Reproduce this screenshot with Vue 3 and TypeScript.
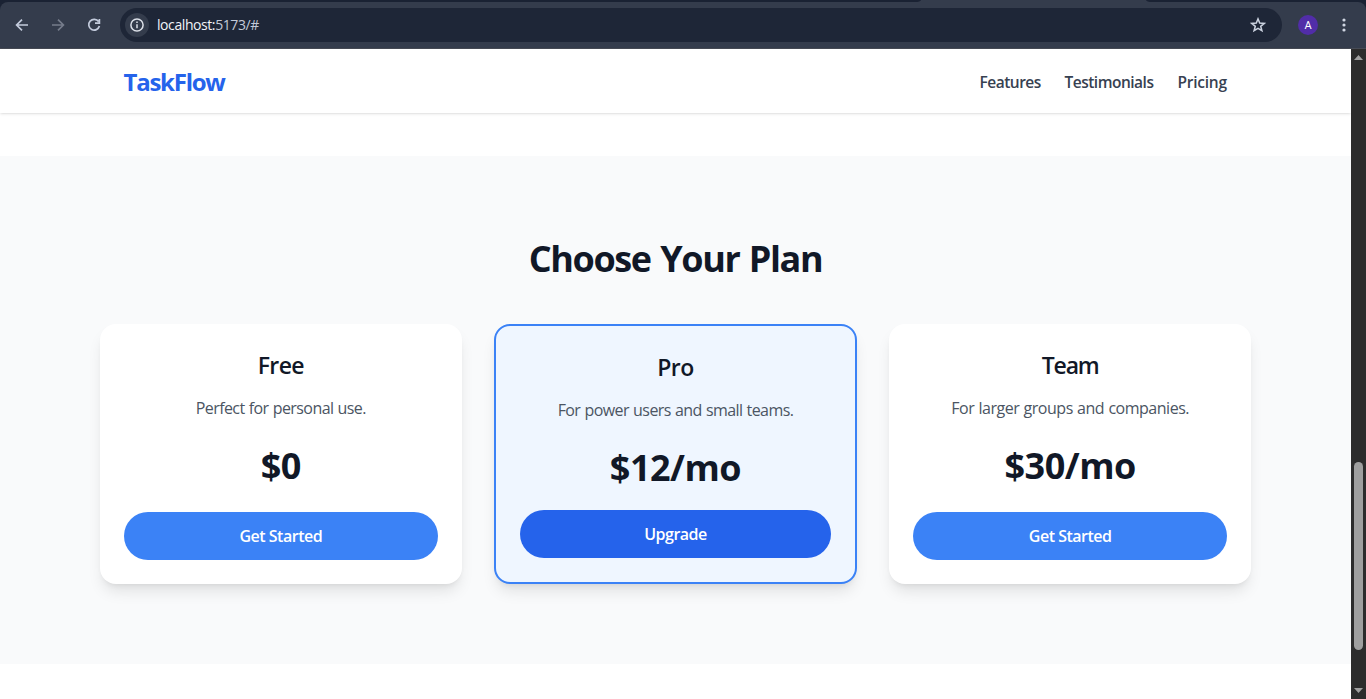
<script setup lang="ts">
interface Plan {
  id: string
  name: string
  text: string
  price: string
  action: string
  featured?: boolean
}

const links: { id: string; label: string }[] = [
  { id: 'features', label: 'Features' },
  { id: 'testimonials', label: 'Testimonials' },
  { id: 'pricing', label: 'Pricing' },
]

const plans: Plan[] = [
  { id: 'free', name: 'Free', text: 'Perfect for personal use.', price: '$0', action: 'Get Started' },
  { id: 'pro', name: 'Pro', text: 'For power users and small teams.', price: '$12/mo', action: 'Upgrade', featured: true },
  { id: 'team', name: 'Team', text: 'For larger groups and companies.', price: '$30/mo', action: 'Get Started' },
]
</script>

<template>
  <div class="window">
    <div class="tabstrip"><div class="strip-left"></div><div class="strip-right"></div></div>
    <div class="toolbar">
      <svg class="tool" viewBox="0 0 16 16"><path d="M14 8H3M8 2.6L2.6 8L8 13.4" /></svg>
      <svg class="tool dim" viewBox="0 0 16 16"><path d="M2 8H13M8 2.6L13.4 8L8 13.4" /></svg>
      <svg class="tool" viewBox="0 0 16 16"><path d="M12.6 4.6A5.4 5.4 0 1 0 13.4 9M13.4 2V6.2H9" /></svg>
      <div class="address">
        <span class="info">
          <svg viewBox="0 0 16 16"><circle cx="8" cy="8" r="6.1" /><path d="M8 7.2V11.3M8 4.5V6" /></svg>
        </span>
        <span class="url"><b>localhost:</b>5173/#</span>
        <svg class="star" viewBox="0 0 16 16"><path d="M8 1.9L9.7 6.1L14.2 6.4L10.7 9.3L11.9 13.7L8 11.3L4.1 13.7L5.3 9.3L1.8 6.4L6.3 6.1Z" /></svg>
      </div>
      <span class="avatar">A</span>
      <svg class="menu" viewBox="0 0 4 16"><circle cx="2" cy="3" r="1.6" /><circle cx="2" cy="8" r="1.6" /><circle cx="2" cy="13" r="1.6" /></svg>
    </div>
    <div class="viewport">
      <div class="page">
        <header class="header">
          <div class="header-inner">
            <span class="brand">TaskFlow</span>
            <nav class="nav">
              <a v-for="l in links" :key="l.id" :class="l.id">{{ l.label }}</a>
            </nav>
          </div>
        </header>
        <section class="pricing-section">
          <h2>Choose Your Plan</h2>
          <div class="plans">
            <article v-for="p in plans" :key="p.id" class="plan" :class="[p.id, { featured: p.featured }]">
              <h3>{{ p.name }}</h3>
              <p class="text">{{ p.text }}</p>
              <p class="price">{{ p.price }}</p>
              <button type="button">{{ p.action }}</button>
            </article>
          </div>
        </section>
      </div>
      <div class="scrollbar">
        <svg viewBox="0 0 9 5"><path d="M4.5 0L9 5H0Z" /></svg>
        <div class="thumb"></div>
        <svg viewBox="0 0 9 5"><path d="M4.5 5L9 0H0Z" /></svg>
      </div>
    </div>
  </div>
</template>

<style>
body { margin: 0; overflow: hidden; }
</style>

<style scoped>
* { box-sizing: border-box; }
.window {
  width: 1366px;
  height: 699px;
  display: flex;
  flex-direction: column;
  overflow: hidden;
  background: #1a2233;
  font-family: 'Segoe UI', 'Open Sans', 'Noto Sans', sans-serif;
}
.tabstrip { height: 2px; flex: none; display: flex; justify-content: space-between; background: #343c4c; }
.strip-left { width: 921px; background: #1a2233; border-bottom-right-radius: 6px 2px; }
.strip-right { width: 220px; background: #1a2233; border-bottom-left-radius: 6px 2px; }
.toolbar {
  height: 47px;
  flex: none;
  display: flex;
  align-items: center;
  padding: 0 20px 0 14px;
  background: #343c4c;
  border-bottom: 1px solid #474b55;
  border-radius: 8px 8px 0 0;
}
.tool { width: 16px; height: 16px; margin-right: 20px; fill: none; stroke: #c3cbdc; stroke-width: 1.7; }
.tool.dim { stroke: #757c8b; }
.tool:nth-child(3) { margin-right: 18px; }
.address {
  width: 1162px;
  height: 34px;
  display: flex;
  align-items: center;
  padding: 0 16px 0 5px;
  border-radius: 17px;
  background: #1e2637;
}
.info { width: 24px; height: 24px; display: flex; align-items: center; justify-content: center; border-radius: 50%; background: #343c4c; }
.info svg { width: 16px; height: 16px; fill: none; stroke: #dce0e8; stroke-width: 1.5; }
.url { flex: 1; margin-left: 8px; font-size: 14px; line-height: 20px; letter-spacing: -0.42px; color: #c3cad8; }
.url b { font-weight: 400; color: #f0f3f8; }
.star { width: 16px; height: 16px; fill: none; stroke: #cbd2df; stroke-width: 1.5; }
.avatar {
  width: 20px;
  height: 20px;
  margin-left: 16px;
  border-radius: 50%;
  background: #512da8;
  color: #fff;
  font: 400 11px/21px Roboto, sans-serif;
  text-align: center;
}
.menu { width: 4px; height: 16px; margin-left: 24px; fill: #d0d6e2; }
.viewport { flex: 1; display: flex; min-height: 0; }
.page { width: 1351px; background: #fff; }
.header { height: 64px; background: #fff; box-shadow: 0 1px 3px rgba(0, 0, 0, 0.1), 0 1px 2px -1px rgba(0, 0, 0, 0.1); }
.header-inner { width: 1152px; height: 64px; margin: 0 auto; padding: 0 24px; display: flex; align-items: center; justify-content: space-between; }
.brand { font-size: 24px; line-height: 32px; font-weight: 700; letter-spacing: -1.25px; color: #2563eb; white-space: nowrap; padding-top: 2px; }
.nav { display: flex; gap: 24px; padding-top: 1px; font-size: 15.5px; line-height: 24px; font-weight: 600; color: #374151; white-space: nowrap; }
.features { width: 61px; letter-spacing: -0.5px; }
.testimonials { width: 89px; letter-spacing: -0.5px; }
.pricing { width: 50px; letter-spacing: -0.25px; }
.pricing-section { height: 508px; margin-top: 43px; padding: 80px 0; background: #f9fafb; color: #111827; text-align: center; }
h2 { margin: 0 0 48px; height: 40px; padding-top: 3px; font-size: 36px; line-height: 40px; font-weight: 700; letter-spacing: -1.4px; word-spacing: 1.5px; }
.plans { width: 1152px; height: 260px; margin: 0 auto; display: grid; grid-template-columns: repeat(3, 1fr); gap: 32px; }
.plan {
  display: flex;
  flex-direction: column;
  padding: 24px;
  border-radius: 16px;
  background: #fff;
  box-shadow: 0 10px 15px -3px rgba(0, 0, 0, 0.1), 0 4px 6px -4px rgba(0, 0, 0, 0.1);
}
.plan.featured { border: 2px solid #3b82f6; background: #eff6ff; }
h3 { margin: 0 0 15px; padding-top: 1px; font-size: 23px; line-height: 32px; font-weight: 600; letter-spacing: -0.6px; }
.team h3 { letter-spacing: -1.2px; }
.text { margin: 0 0 26px; font-size: 16px; line-height: 24px; letter-spacing: -0.58px; word-spacing: 0.6px; color: #4b5563; white-space: nowrap; }
.team .text { letter-spacing: -0.48px; }
.price { margin: 0; font-size: 36px; line-height: 40px; font-weight: 700; letter-spacing: -0.5px; }
button {
  width: 100%;
  height: 48px;
  margin-top: auto;
  padding: 0;
  border: 0;
  border-radius: 24px;
  background: #3b82f6;
  color: #fff;
  font: 600 16px/24px 'Segoe UI', 'Open Sans', 'Noto Sans', sans-serif;
  letter-spacing: -0.5px;
}
.featured button { background: #2563eb; }
.scrollbar { width: 15px; display: flex; flex-direction: column; align-items: center; padding: 6px 0; background: #2c2c2c; }
.scrollbar svg { width: 9px; height: 5px; flex: none; fill: #a0a0a0; }
.thumb { width: 9px; height: 188px; margin: 402px 0 auto; border-radius: 4.5px; background: #9f9f9f; }
</style>
